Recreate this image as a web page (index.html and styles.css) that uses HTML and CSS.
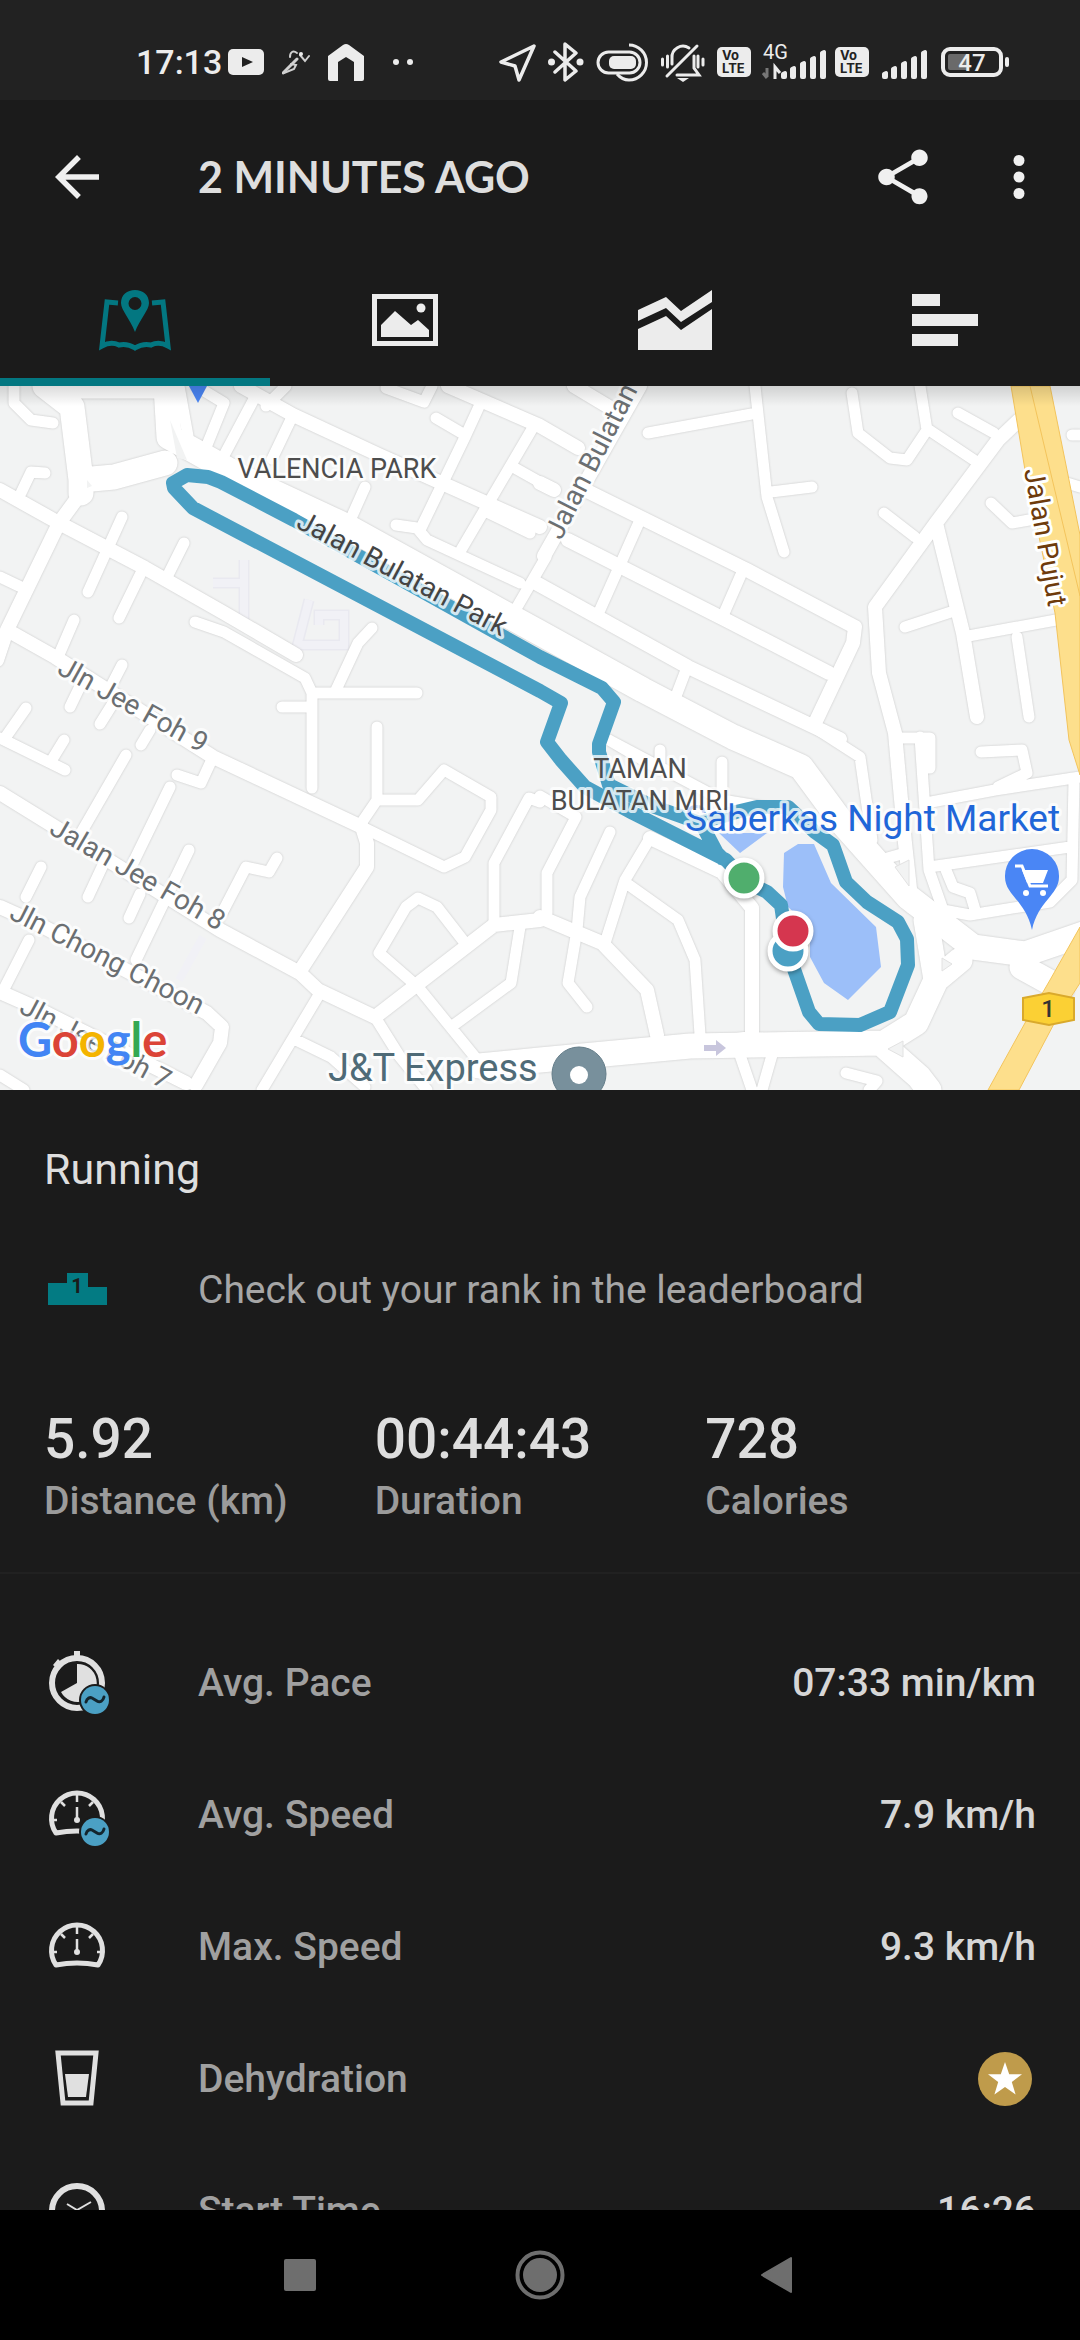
FILE: index.html
```html
<!DOCTYPE html>
<html lang="en">
<head>
<meta charset="utf-8">
<meta name="viewport" content="width=device-width, initial-scale=1">
<title>Activity details</title>
<link rel="stylesheet" href="styles.css">
</head>
<body>
<svg class="sprite" aria-hidden="true">
  <symbol id="gauge" viewBox="0 0 66 66">
    <path d="M12 51A25.500 25.500 0 1 1 54 51Q33 47 12 51z" fill="none" stroke="#e0e0e0" stroke-width="5" stroke-linejoin="round"/>
    <path d="M33 12v8M33 25v11M17 20l4 4M49 20l-4 4M8 38h5M58 38h-5" stroke="#e0e0e0" stroke-width="2.500"/>
    <circle cx="33" cy="38" r="3" fill="#e0e0e0"/>
  </symbol>
  <symbol id="average" viewBox="0 0 32 32">
    <circle cx="16" cy="16" r="16" fill="#1b1b1b"/>
    <circle cx="16" cy="16" r="14" fill="#4ba0c4"/>
    <path d="M7 18c1-4 4-5 6-4l5 3c3 2 6 0 7-4" fill="none" stroke="#14252d" stroke-width="3" stroke-linecap="round"/>
  </symbol>
  <symbol id="bars" viewBox="0 0 48 32">
    <path d="M3 29v-3l2-1v4zM12 29V21l2-1v9zM22 29V16l2-1v14zM32 29V11l2-1v19zM42 29V5l2-1v25z" fill="#ececec" stroke="#ececec" stroke-width="4" stroke-linejoin="round"/>
  </symbol>
</svg>

<header class="status">
  <div class="status-left">
    <span class="clock">17:13</span>
    <div class="status-apps">
      <svg width="36" height="40" viewBox="0 0 36 40"><rect y="7" width="36" height="26" rx="5" fill="#ececec"/><path d="M14 15l11 5-11 5z" fill="#212121"/></svg>
      <svg width="28" height="40" viewBox="0 0 28 40"><g fill="none" stroke="#d0d0d0" stroke-linecap="round"><path d="M15 11c-4-3-7-1-7 4" stroke-width="2"/><path d="M15 17l-6 6-8 8" stroke-width="3"/><path d="M9 22l5 1-2 4-10 4" stroke-width="2"/><path d="M18 13l5 6 4-5" stroke-width="2"/></g><circle cx="19" cy="12" r="2" fill="#ececec"/></svg>
      <svg width="36" height="40" viewBox="0 0 36 40"><path d="M0 14L15 3q3-2 6 0l15 11v23q0 2-2 2h-8V20l-8-5-8 5v19H2q-2 0-2-2z" fill="#ececec"/></svg>
      <svg width="32" height="40" viewBox="0 0 32 40"><circle cx="14" cy="20" r="3" fill="#ececec"/><circle cx="28" cy="20" r="3" fill="#ececec"/></svg>
    </div>
  </div>
  <div class="status-right">
    <svg width="37" height="40" viewBox="0 0 37 40"><path d="M35 4L2 20l14 4 4 14z" fill="none" stroke="#ececec" stroke-width="3.500" stroke-linejoin="round"/></svg>
    <svg width="36" height="40" viewBox="0 0 36 40"><path d="M7 10l21 19-11 9V2l11 9L7 30" fill="none" stroke="#ececec" stroke-width="3.500" stroke-linejoin="round" stroke-linecap="round"/><circle cx="3.500" cy="20" r="3.500" fill="#ececec"/><circle cx="32" cy="20" r="3.500" fill="#ececec"/></svg>
    <svg width="53" height="40" viewBox="0 0 53 40"><g fill="none" stroke="#ececec" stroke-width="3"><rect x="2" y="10" width="42" height="21" rx="10.500"/><path d="M33 3a17 17 0 0 1 0 35q-7 0-12-6"/></g><rect x="13" y="14" width="27" height="13" rx="5" fill="#ececec"/></svg>
    <svg width="44" height="40" viewBox="0 0 44 40"><g fill="none" stroke="#ececec" stroke-width="3" stroke-linecap="round"><path d="M6 34L36 4"/><path d="M11 22v-6a11 11 0 0 1 17-10M33 14v12l5 7H16"/><path d="M1.500 17v6M6.500 14v11M37 14v11M42 17v6"/></g><path d="M16 36h12l-6 4z" fill="#ececec"/></svg>
    <span class="volte"><span>Vo</span><span>LTE</span></span>
    <svg class="signal" width="60" height="40" viewBox="0 0 60 40"><text x="0" y="17" class="net-text">4G</text><path d="M12 37V25l5 6" fill="none" stroke="#ececec" stroke-width="3"/><path d="M4 26v9M0 31l4 5" stroke="#777" stroke-width="3"/><use href="#bars" x="17" y="6" width="48" height="32"/></svg>
    <span class="volte"><span>Vo</span><span>LTE</span></span>
    <svg width="48" height="40" viewBox="0 0 48 40"><use href="#bars" y="6" width="48" height="32"/></svg>
    <svg width="68" height="40" viewBox="0 0 68 40"><rect x="2" y="7" width="58" height="26" rx="7" fill="none" stroke="#ececec" stroke-width="4"/><path d="M9 12h18v16H9q-2 0-2-2V14q0-2 2-2z" fill="#6a6a6a"/><rect x="64" y="15" width="4" height="10" rx="2" fill="#ececec"/><text x="31" y="29" class="battery-text">47</text></svg>
  </div>
</header>

<header class="appbar">
  <button class="icon-button" type="button" aria-label="Back"><svg width="66" height="66" viewBox="0 0 24 24"><path d="M20 11H7.830l5.590-5.590L12 4l-8 8 8 8 1.410-1.410L7.830 13H20z" fill="#f0f0f0"/></svg></button>
  <h1 class="title">2 MINUTES AGO</h1>
  <button class="icon-button" type="button" aria-label="Share"><svg width="66" height="66" viewBox="0 0 24 24"><path d="M18 16.080c-.76 0-1.440.3-1.960.77L8.910 12.700c.05-.23.09-.46.09-.7s-.04-.47-.09-.7l7.050-4.110c.54.5 1.250.81 2.040.81 1.660 0 3-1.340 3-3s-1.340-3-3-3-3 1.340-3 3c0 .24.04.47.09.7L8.040 9.810C7.500 9.310 6.790 9 6 9c-1.660 0-3 1.340-3 3s1.340 3 3 3c.79 0 1.500-.31 2.040-.81l7.120 4.160c-.05.21-.08.43-.08.65 0 1.610 1.310 2.920 2.920 2.920s2.920-1.310 2.920-2.920-1.310-2.920-2.920-2.920z" fill="#f0f0f0"/></svg></button>
  <button class="icon-button more" type="button" aria-label="More options"><svg width="66" height="66" viewBox="0 0 24 24"><g fill="#f0f0f0"><circle cx="12" cy="6" r="2"/><circle cx="12" cy="12" r="2"/><circle cx="12" cy="18" r="2"/></g></svg></button>
</header>

<nav class="tabs" aria-label="Activity views">
  <button class="tab active" type="button" aria-label="Map"><svg width="74" height="62" viewBox="0 0 74 62"><path d="M20 14L9 13 4 57q9-5 17-1 8-2 16 3 8-5 16-3 8-4 17 1L65 13l-11 1" fill="none" stroke="#037781" stroke-width="5" stroke-linejoin="miter"/><path d="M37 1c-8 0-14 5-14 13 0 7 9 16 14 29 5-13 14-22 14-29 0-8-6-13-14-13zm0 7a6 6 0 1 1 0 13 6 6 0 0 1 0-13z" fill="#037781" fill-rule="evenodd"/></svg></button>
  <button class="tab" type="button" aria-label="Photos"><svg width="66" height="52" viewBox="0 0 66 52"><rect x="2.500" y="2.500" width="61" height="47" fill="none" stroke="#ececec" stroke-width="5"/><path d="M9 31l14-14 16 14 7-5 11 10v7H9z" fill="#ececec"/><circle cx="49" cy="14" r="4.500" fill="#ececec"/></svg></button>
  <button class="tab" type="button" aria-label="Charts"><svg width="74" height="62" viewBox="0 0 74 62"><path d="M0 21L28 8l15 14L74 1v12L43 33 28 19 0 32zM0 40l28-13 15 14 31-21v41H0z" fill="#ececec"/></svg></button>
  <button class="tab" type="button" aria-label="Splits"><svg width="66" height="52" viewBox="0 0 66 52"><path d="M0 0h28v12H0zM0 20h66v12H0zM0 40h46v12H0z" fill="#ececec"/></svg></button>
</nav>

<main class="content">
  <svg class="map" viewBox="0 386 1080 704" role="img" aria-label="Route map">
    <defs>
      <linearGradient id="shade" x1="0" y1="0" x2="0" y2="1"><stop offset="0" stop-color="#000" stop-opacity=".14"/><stop offset="1" stop-color="#000" stop-opacity="0"/></linearGradient>
    </defs>
    <rect y="386" width="1080" height="704" fill="#f2f3f3"/>
    <path d="M213 583h31M244 560v60M309 600l-13 50M296 645h48v-30h-25v10" fill="none" stroke="#e9e9f0" stroke-width="11"/>
    <path d="M213 583h31M244 560v60M309 600l-13 50M296 645h48v-30h-25v10M203 937l-24 43" fill="none" stroke="#f1f1f6" stroke-width="8"/>
    <g class="roads">
      <g class="lanes">
        <path d="M195 622l29 10 81 46 7 15v95M312 693h105M282 707h30M372 628l-14 15-22 47M122 517l-34 75M184 543l-17 34M141 573l-22 45M0 577l21 10M74 620l-16 37M122 665l-14 27M83 680l-13 27M115 700l-15 24M26 708L5 738M0 738l65 32M64 740l-11 18M150 730l-9 15"/>
        <path d="M126 755l-45 78M88 897l14-30M170 787l-37 76M129 918l11-24M213 757l-12 26-24-8M189 850l-53 110M277 858l-8 14-23-5-26 50M41 867l-15 30M29 940L5 987M0 1075l24 15"/>
        <path d="M377 727v73l-17 25M377 800h41l26-30 47 27v13l-26 47-21 10-82-40M540 802l-11-4-35 65v62M465 943l-28-36-19-9-12 9-27 46 39 34 61 75M520 927l-9 56-60 44M320 993l-58 97M296 1040l35 17 34 30M375 1017l25 40 27 33"/>
        <path d="M14 386v17l17 17 22 3M21 493l10-21 14 1M179 386l9 50M196 386l28 17-17 42M255 397l-35 66M286 386l-20 20M293 415l-21 44M365 487l-17 38M386 388l38 14 8-16M482 400l-17 37-45 93M436 418l29 17M535 424l-74 126M513 467l41 23M489 513l41 20M396 525l21 3 10 12 93 43M546 557l-33 57"/>
        <path d="M640 520l-41 92M743 570l-21 48M686 670l-13 34M755 386l12 111 17 55M648 433l109-20M771 492l41-5M852 393l6 40 32 25 17 2 20-30-7-44M929 430l45 30M958 413l36 20M884 513l31 24M905 627l52-17M963 637l93-17M1017 637l12 80M991 503l21 20 17-3M1072 435h8M1067 483l13 4"/>
        <path d="M815 728l45 29 12 83M902 738h28v30M926 803l69-13 85-13M981 752l41-2 5 23-29 14M929 867l141-20M946 870l7 17 17 6 6 20M920 737l9 133 14 40 27 5 80-13 22-22 2-100M870 863l35-10"/>
        <path d="M540 796l36 21-29 56v40M610 832l-30 65-3 33-9 53 19 24M650 838l-25 42-20 63M626 883l52 37 17 40 5 75M609 740l51 30M660 750v15M722 762v50M740 1055l12 35M772 1055l-10 35M846 1073l31 8-8 9M609 740l113 60 60 10"/>
      </g>
      <g class="streets">
        <path d="M0 490l59 33 86 45 79 45 72 42M81 493l-22 30L7 630l-10 30M7 630l48 27 158 100 149 70 5 16v24l-67 104M0 793l55 34 165 103 80 43 18 17 57 27 119-92 46-5M0 907l40 18 167 88 15 14-2 16-24 42M0 992l34 15 152 76"/>
        <path d="M241 386l52 29 86 40 161 72M448 386l92 40 38 22M574 386l40 24M540 483l14 7M585 490l162 80 108 57-2 16-38 80M568 540l158 80 103 53M536 583l152 84 152 72M640 386l-96 170"/>
        <path d="M1019 420l-21 20-62 83-61 84 4 66 16 60 10 110 7 64M936 523l27 110 14 84M540 917l62 26 45 47 10 45M650 838l72 34 30 36v130l-60 8"/>
      </g>
      <g class="avenues">
        <path d="M45 386l27 21 9 73v13M81 480l33-3 51-14M45 386h120M166 386l3 51 24 13 48 27 103 48 196 108 103 57 90 47 68 30 42 57 65 73 65 50 52 7 58-20"/>
        <path d="M479 1066l61-6 150-14 194-3 32-20 20-43-10-60M884 1046l35 31 10 13M936 980l24-20M1022 967l40 22"/>
      </g>
    </g>
    <path d="M170 420l7 38 10 2M87 480l5 6-5 2z" fill="#f2f3f3"/>
    <path d="M942 958l10 6-10 7zM888 1049l15-8v16zM895 867l14-7v26z" fill="#f2f3f3" stroke="#e2e2e2"/>
    <path d="M1011 386h39l17 84 13 65v240l-11-35-14-127-30-143z" fill="#fddf8c" stroke="#f3c45c" stroke-width="1"/>
    <path d="M1030 386l50 210" fill="none" stroke="#f3c45c"/>
    <path d="M1080 927l-30 53-25 43-37 67h31l37-70 24-37z" fill="#fddf8c" stroke="#f3c45c"/>
    <path d="M798 844h16l17 39 45 44 5 40-33 33-24-17-14-26v-30l-22-20-5-20 1-34zM719 833h48l-27 20z" fill="#9cbff9"/>
    <path d="M704 1045h12v-5l10 8-10 8v-5h-12z" fill="#c8c6dd"/>
    <path class="track" d="M743 878l-17-18-93-47-48-26-24-27-14-18 14-39-21-12-347-183-19-20-1-5 14-8 21 2 13 5 73 38 246 137 62 31 12 14-15 42v8l10 33 43 21 48 17 36-11 21-5h31l27 25 18 13 13 37 21 20 31 20 9 17 1 26-18 47-30 13-41-1-10-12-14-40-7-20-7-47-14-13-24-12M700 821l17 32 7 7"/>

    <g class="label area">
      <text x="337" y="478">VALENCIA PARK</text>
      <text x="640" y="778">TAMAN</text>
    </g>
    <g class="label street">
      <text transform="translate(295 527) rotate(28)">Jalan Bulatan Park</text>
      <g class="muted">
        <text transform="translate(56 673) rotate(29)">Jln Jee Foh 9</text>
        <text transform="translate(48 833) rotate(30)">Jalan Jee Foh 8</text>
        <text transform="translate(8 918) rotate(27)">Jln Chong Choon</text>
        <text transform="translate(18 1012) rotate(28)">Jln Jee Foh 7</text>
        <text transform="translate(561 541) rotate(-63)">Jalan Bulatan</text>
      </g>
      <text class="highway" transform="translate(1024 470) rotate(80)">Jalan Pujut</text>
    </g>
    <text class="label place market" x="685" y="831">Saberkas Night Market</text>
    <g class="label area"><text x="640" y="810">BULATAN MIRI</text></g>
    <text class="label place depot" x="328" y="1081">J&amp;T Express</text>
    <text class="label google" x="18" y="1057"><tspan fill="#4285f4">G</tspan><tspan fill="#db4437">o</tspan><tspan fill="#f4b400">o</tspan><tspan fill="#4285f4">g</tspan><tspan fill="#34a853">l</tspan><tspan fill="#db4437">e</tspan></text>

    <path d="M189 386h18l-9 17z" fill="#4a86f5"/>
    <path d="M1032 849a27 27 0 0 1 27 28c0 18-21 24-27 53-6-29-27-35-27-53a27 27 0 0 1 27-28z" fill="#4a86f5"/>
    <path d="M1015 866h7l8 20h18" fill="none" stroke="#fff" stroke-width="3"/><path d="M1022 870h26l-5 13h-16z" fill="#fff"/><circle cx="1026" cy="893" r="3" fill="#fff"/><circle cx="1043" cy="893" r="3" fill="#fff"/>
    <circle cx="579" cy="1074" r="27" fill="#78909c" stroke="#647d89" stroke-width="1"/><circle cx="579" cy="1075" r="9" fill="#fff"/>
    <path d="M1023 998l26-5 25 5v22l-25 5-26-5z" fill="#fbd034" stroke="#d9a92c" stroke-width="2"/>
    <text class="shield" x="1048" y="1017">1</text>
    <g class="markers">
      <circle cx="788" cy="951" r="18" fill="#4ba0c4"/>
      <circle cx="793" cy="931" r="18" fill="#d5364f"/>
      <circle cx="744" cy="878" r="18" fill="#50ae6d"/>
    </g>
    <rect y="386" width="1080" height="20" fill="url(#shade)"/>
  </svg>

  <h2 class="activity">Running</h2>
  <a class="leaderboard" href="#leaderboard">
    <svg width="66" height="66" viewBox="0 0 66 66"><path d="M4 26h19V16h21v14h19v18H4z" fill="#037b83"/><text x="33" y="36" class="podium-text">1</text></svg>
    <span>Check out your rank in the leaderboard</span>
  </a>

  <dl class="stats">
    <div><dt>Distance (km)</dt><dd>5.92</dd></div>
    <div><dt>Duration</dt><dd>00:44:43</dd></div>
    <div><dt>Calories</dt><dd>728</dd></div>
  </dl>

  <dl class="details">
    <div class="row">
      <dt><svg width="66" height="66" viewBox="0 0 66 66"><circle cx="33" cy="33" r="25" fill="none" stroke="#e0e0e0" stroke-width="6"/><path d="M30 1h6v6h-6zM9 15l5-6 4 4-5 6z" fill="#e0e0e0"/><path d="M33 33V14a19 19 0 1 1-16 28z" fill="#e0e0e0"/><use href="#average" x="35" y="34" width="32" height="32"/></svg>Avg. Pace</dt>
      <dd>07:33 min/km</dd>
    </div>
    <div class="row">
      <dt><svg width="66" height="66" viewBox="0 0 66 66"><use href="#gauge"/><use href="#average" x="35" y="34" width="32" height="32"/></svg>Avg. Speed</dt>
      <dd>7.9 km/h</dd>
    </div>
    <div class="row">
      <dt><svg width="66" height="66" viewBox="0 0 66 66"><use href="#gauge"/></svg>Max. Speed</dt>
      <dd>9.3 km/h</dd>
    </div>
    <div class="row">
      <dt><svg width="66" height="66" viewBox="0 0 66 66"><path d="M14 7h38l-5 50H19z" fill="none" stroke="#e0e0e0" stroke-width="5" stroke-linejoin="miter"/><path d="M21 28h24l-3 23H24z" fill="#e0e0e0"/></svg>Dehydration</dt>
      <dd><svg width="62" height="56" viewBox="0 0 62 56" role="img" aria-label="Premium"><circle cx="31" cy="28" r="27" fill="#bf9b4b"/><path d="M31 11l4.200 12.200H48l-10.200 7.800 3.800 12.500L31 36l-10.600 7.500 3.800-12.500L14 23.200h12.800z" fill="#fff"/></svg></dd>
    </div>
    <div class="row">
      <dt><svg width="66" height="66" viewBox="0 0 66 66"><circle cx="33" cy="33" r="25" fill="none" stroke="#e0e0e0" stroke-width="6"/><path d="M23 26l10 6 14-8" fill="none" stroke="#e0e0e0" stroke-width="2"/></svg>Start Time</dt>
      <dd>16:26</dd>
    </div>
  </dl>
</main>

<nav class="system" aria-label="System">
  <button type="button" aria-label="Recent apps"><svg width="50" height="50" viewBox="0 0 50 50"><rect x="9" y="9" width="32" height="32" rx="2" fill="#6e6e6e"/></svg></button>
  <button type="button" aria-label="Home"><svg width="50" height="50" viewBox="0 0 50 50"><circle cx="25" cy="25" r="22.500" fill="none" stroke="#6e6e6e" stroke-width="4"/><circle cx="25" cy="25" r="17" fill="#6e6e6e"/></svg></button>
  <button type="button" aria-label="Back"><svg width="50" height="50" viewBox="0 0 50 50"><path d="M7 25L36 8v34z" fill="#6e6e6e" stroke="#6e6e6e" stroke-width="2" stroke-linejoin="round"/></svg></button>
</nav>
</body>
</html>
```
FILE: styles.css
```css
* { box-sizing: border-box; }

body {
  margin: 0;
  height: 100vh;
  display: flex;
  flex-direction: column;
  overflow: hidden;
  background: #1b1b1b;
  color: #dedede;
  font-family: Roboto, "Noto Sans", sans-serif;
}

h1, h2, dl, dd, dt { margin: 0; }
svg { display: block; flex: none; }
button { border: 0; padding: 0; background: none; color: inherit; font: inherit; }
.sprite { position: absolute; width: 0; height: 0; }

/* Status bar */
.status {
  flex: none;
  display: flex;
  align-items: center;
  justify-content: space-between;
  height: 100px;
  padding: 24px 71px 0 136px;
  background: #222;
}
.status-left, .status-right, .status-apps { display: flex; align-items: center; }
.status-left { gap: 6px; }
.status-apps { gap: 18px; }
.status-right { gap: 12px; }
.clock { font-size: 34px; line-height: 40px; font-weight: 500; color: #ececec; }
.volte {
  display: flex;
  flex-direction: column;
  width: 34px;
  height: 30px;
  padding: 2px 0 2px 5px;
  border-radius: 5px;
  background: #ececec;
  color: #222;
  font: 700 13px/13px Inter, sans-serif;
}
.signal { overflow: visible; }
.net-text { font: 400 20px Roboto, sans-serif; fill: #ececec; }
.battery-text { font: 500 24px Roboto, sans-serif; fill: #ececec; text-anchor: middle; }

/* App bar */
.appbar {
  flex: none;
  display: flex;
  align-items: center;
  height: 154px;
  padding: 0 28px 0 44px;
}
.icon-button { flex: none; }
.more { margin-left: 50px; }
.title {
  flex: 1;
  padding-left: 88px;
  font: 700 43px/48px Lato, sans-serif;
}

/* Tabs */
.tabs { flex: none; display: grid; grid-template-columns: repeat(4, 1fr); height: 132px; }
.tab { display: flex; align-items: center; justify-content: center; }
.active { box-shadow: inset 0 -8px #037781; }

/* Map */
.content { flex: 1; min-height: 0; overflow: hidden; }
.map { width: 100%; height: auto; }
.roads { fill: none; stroke: #fff; stroke-linecap: round; stroke-linejoin: round; filter: drop-shadow(0 0 1px #c4c4c4); }
.lanes { stroke-width: 11px; }
.streets { stroke-width: 14px; }
.avenues { stroke-width: 25px; }
.track { fill: none; stroke: #4ba0c4; stroke-width: 14px; stroke-linejoin: round; }
.label { paint-order: stroke; stroke: #fff; stroke-opacity: .75; stroke-width: 6px; stroke-linejoin: round; }
.area { font-size: 27px; fill: #4d4d4d; text-anchor: middle; }
.street { font-size: 28px; fill: #444; }
.muted { fill: #6b6f72; }
.highway { fill: #6e3b0c; stroke-opacity: 1; }
.place { font-size: 38px; }
.market { font-size: 37px; fill: #1f66d8; }
.depot { fill: #4f6b77; }
.google { font: 700 47px Lato, sans-serif; }
.shield { font-size: 24px; font-weight: 500; fill: #333; text-anchor: middle; }
.markers { stroke: #fff; stroke-width: 5px; filter: drop-shadow(0 2px 2px #0005); }

/* Summary */
.activity { padding: 55px 44px 31px; font-size: 43px; line-height: 48px; font-weight: 400; }
.leaderboard {
  display: flex;
  align-items: center;
  gap: 88px;
  height: 132px;
  padding: 0 44px;
  font-size: 39px;
  line-height: 48px;
  color: #a6a6a6;
  text-decoration: none;
}
.podium-text { font-size: 20px; font-weight: 700; fill: #1b1b1b; text-anchor: middle; }
.stats {
  display: grid;
  grid-template-columns: repeat(3, 1fr);
  padding: 51px 44px 47px;
  border-bottom: 2px solid #212121;
}
.stats div { display: flex; flex-direction: column-reverse; gap: 6px; }
.stats dt { font-size: 39px; line-height: 48px; font-weight: 500; color: #9b9b9b; }
.stats dd { font-size: 55px; line-height: 64px; font-weight: 500; }

/* Detail rows */
.details { padding-top: 43px; }
.row {
  display: flex;
  align-items: center;
  justify-content: space-between;
  height: 132px;
  padding: 0 44px;
  font-size: 39px;
  line-height: 48px;
  font-weight: 500;
}
.row dt { display: flex; align-items: center; gap: 88px; color: #a0a0a0; }
.row dd { color: #d6d6d6; }

/* System navigation */
.system {
  flex: none;
  display: flex;
  justify-content: center;
  height: 130px;
  background: #000;
}
.system button { display: flex; align-items: center; justify-content: center; width: 240px; }
```
